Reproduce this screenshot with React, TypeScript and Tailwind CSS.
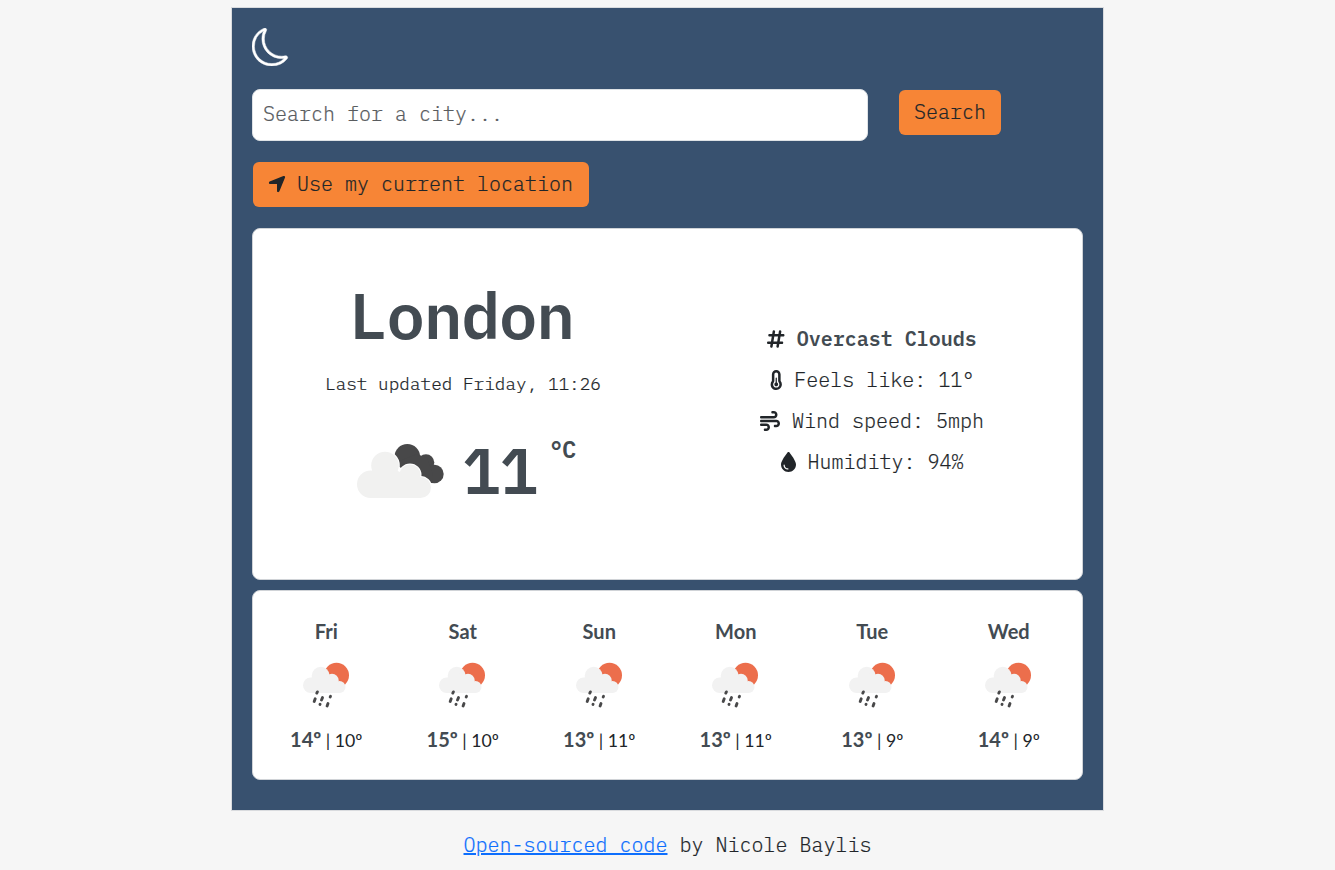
import { BsMoon } from "react-icons/bs";
import { FaHashtag, FaTemperatureHalf, FaWind, FaDroplet, FaLocationArrow } from "react-icons/fa6";

function CloudShape() {
  return (
    <>
      <circle cx="13.7" cy="40.3" r="13.7" />
      <circle cx="28" cy="21.5" r="13.8" />
      <circle cx="53" cy="31" r="10.5" />
      <circle cx="63.5" cy="43.5" r="10.5" />
      <path d="M13.700 54V28l6-4h14l14 6 16 13v11z" />
    </>
  );
}

function CloudIcon() {
  return (
    <svg className="h-[54px] w-[88px] shrink-0" viewBox="0 0 88 54">
      <g fill="#484849">
        <circle cx="50.300" cy="12.8" r="12.8" />
        <circle cx="69" cy="18.5" r="8.3" />
        <circle cx="77.500" cy="30" r="9.2" />
        <path d="M40 18l20-8 10 4 6 16-1 9H60z" />
      </g>
      <g fill="#fff" stroke="#fff" strokeWidth="2">
        <CloudShape />
      </g>
      <g fill="#f1f1f0">
        <CloudShape />
      </g>
    </svg>
  );
}

function RainIcon() {
  return (
    <svg className="h-[46px] w-[48px]" viewBox="0 0 48 46">
      <circle cx="33.500" cy="13.3" r="12.5" fill="#ec6e4c" />
      <path d="M28 26h15v8H28z" fill="#fff" />
      <g fill="#f2f2f2">
        <circle cx="7.700" cy="23.300" r="7.700" />
        <circle cx="17.700" cy="13.800" r="9" />
        <circle cx="29" cy="18.500" r="6.700" />
        <circle cx="36.500" cy="25" r="6" />
        <path d="M7.700 31V16l10-5 9 3 9 10 .8 7z" />
      </g>
      <g stroke="#484849" strokeWidth="2.900" strokeLinecap="round">
        <path d="M14.400 29.900l-.6 1.200M12.200 36.800l-1 2.600M19.500 35.600l-1 2.400M27.500 34.300l-.3.600M17.100 42.200l-.1.200M25 41.500l-.9 2.400" />
      </g>
    </svg>
  );
}

const days = [
  ["Fri", "14º", "10º"],
  ["Sat", "15º", "10º"],
  ["Sun", "13º", "11º"],
  ["Mon", "13º", "11º"],
  ["Tue", "13º", "9º"],
  ["Wed", "14º", "9º"],
];

export default function App() {
  return (
    <div className="h-[870px] overflow-hidden bg-[#f6f6f6] pt-2 font-['IBM_Plex_Mono','Liberation_Mono',monospace] text-[20px] font-light text-[#212529]">
      <main className="mx-auto h-[802px] w-[871px] bg-[#38516f] px-5 pt-5 shadow-[0_0_0_1px_#d9dbde]">
        <BsMoon className="h-[38px] w-[38px] text-white" strokeWidth=".2" />
        <form className="mt-[23px] flex items-start" onSubmit={(e) => e.preventDefault()}>
          <input
            className="h-[52px] w-[616px] rounded-lg border border-[#dee2e6] bg-white px-[10px] pb-[3px] outline-none placeholder:text-[#595c5f] [-webkit-text-stroke:.200px]"
            placeholder="Search for a city..."
          />
          <button className="mt-px ml-[31px] h-[45px] w-[102px] rounded-md bg-[#f78536] pb-[2px] [-webkit-text-stroke:.200px]">
            Search
          </button>
        </form>
        <button className="mt-[21px] ml-px flex h-[45px] w-[336px] items-center rounded-md bg-[#f78536] pb-px pl-[14px] whitespace-nowrap [-webkit-text-stroke:.200px]">
          <FaLocationArrow className="mr-[10px] h-5 w-5" />
          Use my current location
        </button>
        <section className="mt-[21px] flex h-[352px] w-[831px] rounded-lg border border-[#d0d3d7] bg-white">
          <div className="flex w-[420px] flex-col items-center pt-[56px]">
            <h1 className="mr-[3px] h-[68px] text-[64px] leading-[61px] font-semibold tracking-[-.900px] text-[#434b52]">
              London
            </h1>
            <p className="mt-[18px] text-[17.700px] leading-[26px] [-webkit-text-stroke:.200px]">
              Last updated Friday, 11:26
            </p>
            <div className="mt-[47px] flex h-[60px] w-[220px] items-start pl-1 text-[#434b52]">
              <CloudIcon />
              <span className="mt-[-4px] ml-[17px] text-[64px] leading-[60px] font-semibold tracking-[-.900px]">11</span>
              <span className="mt-[-4px] ml-[12px] text-[24px] leading-[18px] font-semibold tracking-[-1.400px]">°C</span>
            </div>
          </div>
          <ul className="flex flex-1 flex-col items-center pt-[89px] pr-[11px] leading-[41px] [-webkit-text-stroke:.200px]">
            <li className="flex items-center">
              <FaHashtag className="mr-[12px] h-5 w-[17.500px]" />
              <span className="font-semibold text-[#434b52] [-webkit-text-stroke:0px]">Overcast Clouds</span>
            </li>
            <li className="flex items-center">
              <FaTemperatureHalf className="mr-[12px] h-5 w-[12.500px]" />
              Feels like: 11°
            </li>
            <li className="flex items-center">
              <FaWind className="mr-[12px] h-5 w-5" />
              Wind speed: 5mph
            </li>
            <li className="flex items-center">
              <FaDroplet className="mr-[12px] h-5 w-[15px]" />
              Humidity: 94%
            </li>
          </ul>
        </section>
        <section className="mt-[10px] grid h-[190px] w-[831px] grid-cols-6 rounded-lg border border-[#d0d3d7] bg-white px-[5px] pt-[25px] text-center font-['Lato',sans-serif] font-normal">
          {days.map(([day, high, low]) => (
            <div key={day} className="flex flex-col items-center">
              <strong className="leading-[30px] text-[#434b52]">{day}</strong>
              <div className="mt-[16px] pl-[1px]">
                <RainIcon />
              </div>
              <p className="mt-[16px] text-[17.700px] leading-[30px]">
                <strong className="text-[20px] text-[#434b52]">{high}</strong> | {low}
              </p>
            </div>
          ))}
        </section>
      </main>
      <footer className="mt-5 text-center leading-[30px] [-webkit-text-stroke:.200px]">
        <a className="text-[#0d6efd] underline" href="#">Open-sourced code</a> by Nicole Baylis
      </footer>
    </div>
  );
}
